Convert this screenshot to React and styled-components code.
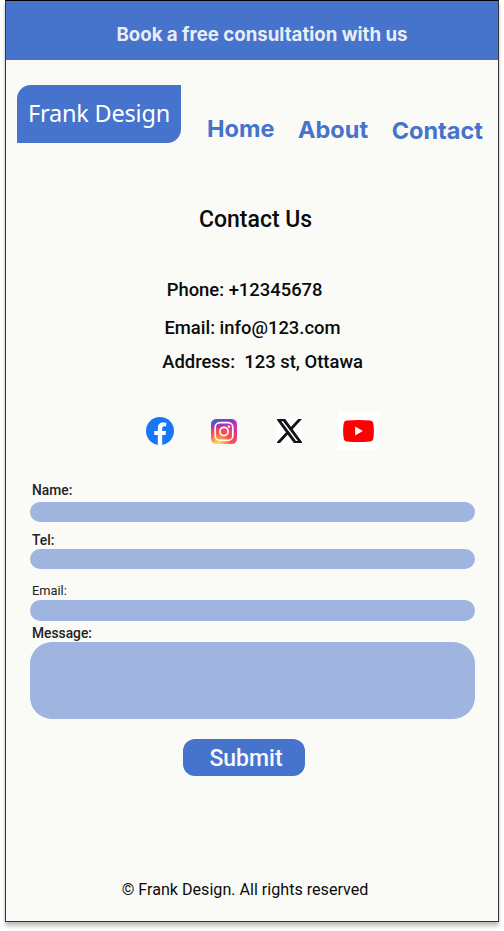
import React from 'react';
import styled, { createGlobalStyle } from 'styled-components';

const BLUE = '#4673cb';
const PALE = '#9fb5df';
const PAPER = '#fafbf6';

const GlobalStyle = createGlobalStyle`
  *, *::before, *::after { box-sizing: border-box; }
  body { margin: 0; background: #fff; overflow: hidden; }
`;

const Page = styled.main`
  width: 504px;
  height: 931px;
  padding-left: 5px;
  font-family: Roboto, "Liberation Sans", sans-serif;
  color: #0b0b0b;
`;

const Frame = styled.div`
  display: flex;
  flex-direction: column;
  width: 494px;
  height: 922px;
  background: ${PAPER};
  border: 1px solid #333;
  border-top-color: #000;
  box-shadow: 0 4px 4px rgba(0, 0, 0, 0.25);
`;

const Banner = styled.div`
  height: 59px;
  padding: 8px 0 0 20px;
  background: ${BLUE};
  color: #e8eef6;
  font: 700 18.65px/51px Inter, sans-serif;
  text-align: center;
  white-space: nowrap;
`;

const Header = styled.header`
  display: flex;
  align-items: flex-start;
  height: 145px;
  padding: 25px 0 0 11px;
`;

const Logo = styled.div`
  width: 164px;
  height: 58px;
  border-radius: 14px 0;
  background: ${BLUE};
  color: #fff;
  font: 400 23.5px/57px "Noto Sans", sans-serif;
  letter-spacing: -0.2px;
  text-align: center;
  white-space: nowrap;
`;

const Nav = styled.nav`
  display: flex;
  align-items: flex-start;
  gap: 23.6px;
  padding: 30px 0 0 26px;
`;

const NavLink = styled.a`
  margin-top: ${(p) => p.$drop}px;
  color: ${BLUE};
  font: 700 23.5px/28px Inter, sans-serif;
`;

const Title = styled.h1`
  height: 73px;
  margin: 0;
  padding-left: 193px;
  font-size: 23px;
  font-weight: 500;
  line-height: 30px;
`;

const ContactList = styled.div`
  height: 134px;
`;

const ContactLine = styled.p`
  height: ${(p) => p.$height}px;
  margin: 0;
  padding-left: ${(p) => p.$indent}px;
  font-size: 18.42px;
  font-weight: 500;
  line-height: 24px;
  white-space: pre;
`;

const Social = styled.div`
  display: flex;
  align-items: center;
  height: 38px;
  padding-left: 140px;

  svg { display: block; flex: none; }
`;

const IconSlot = styled.span`
  display: flex;
  align-items: center;
  justify-content: center;
  width: ${(p) => p.$width}px;
  height: ${(p) => p.$height}px;
  margin-right: ${(p) => p.$after || 0}px;
  background: ${(p) => p.$fill || 'transparent'};
`;

const Form = styled.form`
  display: flex;
  flex-direction: column;
  padding: 31px 23px 0 24px;
`;

const Label = styled.label`
  height: ${(p) => p.$height}px;
  padding-left: 2px;
  color: #222;
  font-size: ${(p) => p.$size || 13.8}px;
  font-weight: ${(p) => p.$weight || 500};
  line-height: ${(p) => p.$line || 18}px;
`;

const Field = styled.input`
  width: 445px;
  height: ${(p) => p.$height}px;
  margin: 0 0 ${(p) => p.$after}px;
  padding: 0 12px;
  border: 0;
  border-radius: 11px;
  background: ${PALE};
`;

const MessageField = styled.textarea`
  display: block;
  width: 445px;
  height: 77px;
  padding: 12px 20px;
  border: 0;
  border-radius: 22px;
  background: ${PALE};
  resize: none;
`;

const Submit = styled.button`
  width: 122px;
  height: 37px;
  margin: 20px 0 0 153px;
  padding: 2px 0 0 4px;
  border: 0;
  border-radius: 12px;
  background: ${BLUE};
  color: #f7f9fd;
  font: 500 23px/35px Roboto, sans-serif;
`;

const Footer = styled.footer`
  margin-top: auto;
  padding: 0 0 21px 115.7px;
  font-size: 16.12px;
  line-height: 20px;
`;

const FacebookIcon = () => (
  <svg width="28" height="28" viewBox="0 0 28 28">
    <circle cx="14" cy="14" r="14" fill="#1877f2" />
    <path
      d="M19.45 18.05 20.07 14H16.2v-2.63c0-1.1.54-2.19 2.28-2.19h1.76V5.74s-1.6-.27-3.13-.27c-3.19 0-5.28 1.94-5.28 5.44V14H8.27v4.05h3.56v9.78a14.1 14.1 0 0 0 4.37 0v-9.78z"
      fill="#fff"
    />
  </svg>
);

const InstagramIcon = () => (
  <svg width="26" height="26" viewBox="0 0 26 26">
    <defs>
      <radialGradient id="igWarm" cx="0.27" cy="1.07" r="0.99">
        <stop offset="0" stopColor="#ffdd55" />
        <stop offset="0.1" stopColor="#ffdd55" />
        <stop offset="0.5" stopColor="#ff543e" />
        <stop offset="1" stopColor="#c837ab" />
      </radialGradient>
      <radialGradient
        id="igCool"
        cx="0"
        cy="0"
        r="1"
        gradientTransform="matrix(0.087 0.435 -1.794 0.359 -0.168 0.072)"
      >
        <stop offset="0" stopColor="#3771c8" />
        <stop offset="0.13" stopColor="#3771c8" />
        <stop offset="1" stopColor="#6600ff" stopOpacity="0" />
      </radialGradient>
    </defs>
    <rect width="26" height="25" y="1" rx="5.5" fill="url(#igWarm)" />
    <rect width="26" height="25" y="1" rx="5.5" fill="url(#igCool)" />
    <g fill="none" stroke="#fff" strokeWidth="1.7">
      <rect x="4.2" y="4.7" width="17.6" height="17.6" rx="4.6" />
      <circle cx="13" cy="13.5" r="4.1" />
    </g>
    <circle cx="17.9" cy="8.6" r="1.2" fill="#fff" />
  </svg>
);

const XIcon = () => (
  <svg width="25" height="24" viewBox="0 0 1200 1227" preserveAspectRatio="none">
    <path
      d="M714.163 519.284 1160.89 0h-105.86L667.137 450.887 357.328 0H0l468.492 681.821L0 1226.37h105.866l409.625-476.152 327.181 476.152H1200L714.137 519.284zM569.165 687.828l-47.468-67.894L144.011 79.694h162.604l304.797 435.991 47.468 67.894 396.2 566.721H892.476L569.165 687.854z"
      fill="#0f1419"
      stroke="#0f1419"
      strokeWidth="60"
    />
  </svg>
);

const YouTubeIcon = () => (
  <svg width="31" height="22" viewBox="0 0 31 22">
    <path
      d="M3.9.6C11-.1 20-.1 27.1.6c1.8.2 2.9 1.3 3.2 3 .8 5 .8 9.8 0 14.8-.3 1.7-1.4 2.8-3.2 3-7.1.7-16.1.7-23.2 0-1.8-.2-2.9-1.3-3.2-3-.8-5-.8-9.8 0-14.8.3-1.7 1.4-2.8 3.2-3z"
      fill="#f00"
    />
    <path d="M12.2 6.5v9l7.6-4.5z" fill="#fff" />
  </svg>
);

export default function App() {
  return (
    <Page>
      <GlobalStyle />
      <Frame>
        <Banner>Book a free consultation with us</Banner>
        <Header>
          <Logo>Frank Design</Logo>
          <Nav>
            <NavLink $drop={0}>Home</NavLink>
            <NavLink $drop={1}>About</NavLink>
            <NavLink $drop={2}>Contact</NavLink>
          </Nav>
        </Header>
        <Title>Contact Us</Title>
        <ContactList>
          <ContactLine $height={38} $indent={160.7}>Phone: +12345678</ContactLine>
          <ContactLine $height={34} $indent={158.4}>Email: info@123.com</ContactLine>
          <ContactLine $height={24} $indent={156.2}>{'Address:  123 st, Ottawa'}</ContactLine>
        </ContactList>
        <Social>
          <IconSlot $width={28} $height={28} $after={37}><FacebookIcon /></IconSlot>
          <IconSlot $width={26} $height={26} $after={39}><InstagramIcon /></IconSlot>
          <IconSlot $width={26} $height={26} $after={36} $fill="#fff"><XIcon /></IconSlot>
          <IconSlot $width={41} $height={38} $fill="#fff"><YouTubeIcon /></IconSlot>
        </Social>
        <Form>
          <Label htmlFor="name" $height={21}>Name:</Label>
          <Field id="name" $height={20} $after={8} />
          <Label htmlFor="tel" $height={19} $line={20}>Tel:</Label>
          <Field id="tel" $height={20} $after={12} />
          <Label htmlFor="email" $height={19} $size={12.8} $line={20} $weight={400}>Email:</Label>
          <Field id="email" $height={21} $after={3} />
          <Label htmlFor="message" $height={18}>Message:</Label>
          <MessageField id="message" />
          <Submit type="button">Submit</Submit>
        </Form>
        <Footer>© Frank Design. All rights reserved</Footer>
      </Frame>
    </Page>
  );
}
